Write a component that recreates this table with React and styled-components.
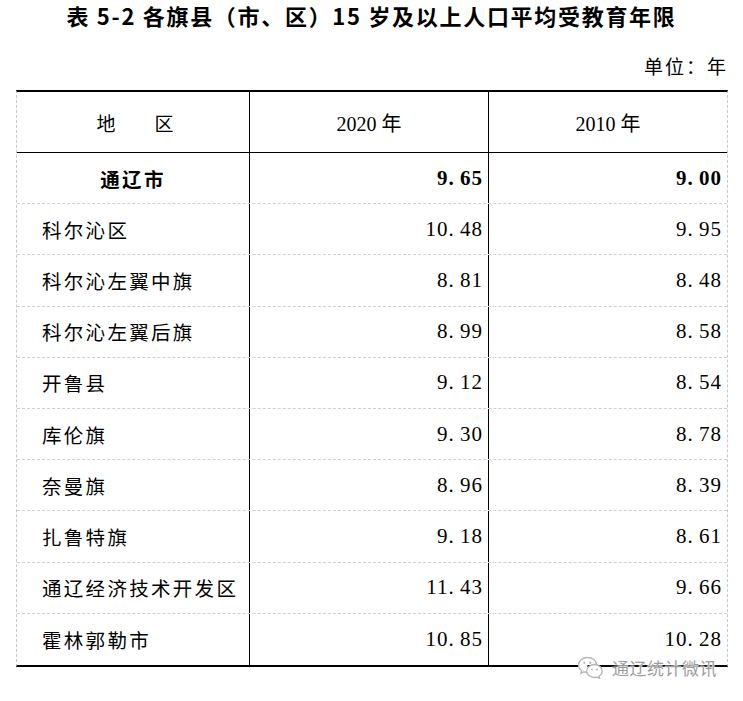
import React from 'react'
import styled, { createGlobalStyle } from 'styled-components'

const rows = [
  ['科尔沁区', '10.48', '9.95'],
  ['科尔沁左翼中旗', '8.81', '8.48'],
  ['科尔沁左翼后旗', '8.99', '8.58'],
  ['开鲁县', '9.12', '8.54'],
  ['库伦旗', '9.30', '8.78'],
  ['奈曼旗', '8.96', '8.39'],
  ['扎鲁特旗', '9.18', '8.61'],
  ['通辽经济技术开发区', '11.43', '9.66'],
  ['霍林郭勒市', '10.85', '10.28'],
]

const Num = ({ value }) => {
  const [a, b] = value.split('.')
  return <>{a}<Dot>.</Dot>{b}</>
}

export default function App() {
  return (
    <Page>
      <GlobalStyle />
      <Title>表 5-2 各旗县（市、区）15 岁及以上人口平均受教育年限</Title>
      <Unit>单位：年</Unit>

      <Table>
        <HeadRow>
          <HeadCell><Spaced>地　区</Spaced></HeadCell>
          <HeadCell line>2020 年</HeadCell>
          <HeadCell line>2010 年</HeadCell>
        </HeadRow>

        <Row>
          <TotalName>通辽市</TotalName>
          <NumCell line bold><Num value="9.65" /></NumCell>
          <NumCell line bold><Num value="9.00" /></NumCell>
        </Row>

        {rows.map((r, i) => (
          <Row key={r[0]} last={i === rows.length - 1}>
            <Name>{r[0]}</Name>
            <NumCell line><Num value={r[1]} /></NumCell>
            <NumCell line><Num value={r[2]} /></NumCell>
          </Row>
        ))}
      </Table>

      <Watermark>
        <svg width="27" height="23" viewBox="0 0 27 23" fill="none">
          <path d="M10.5 1.5C5.3 1.5 1.5 4.9 1.5 9c0 2.3 1.2 4.3 3.2 5.7l-.9 2.8 3.2-1.7c1.1.3 2.2.5 3.5.5"
            stroke="#b5b5b5" strokeWidth="1.3" fill="#fff" />
          <path d="M10.5 1.5c5 0 8.8 3.2 9 7.2" stroke="#b5b5b5" strokeWidth="1.3" />
          <path d="M17.5 8.5c-4.3 0-7.8 2.9-7.8 6.5s3.5 6.5 7.8 6.5c.9 0 1.8-.1 2.6-.4l2.6 1.4-.7-2.3c1.9-1.2 3.2-3.1 3.2-5.2 0-3.6-3.4-6.5-7.7-6.5z"
            stroke="#b5b5b5" strokeWidth="1.3" fill="#fff" />
          <circle cx="7.3" cy="6.8" r="1.1" fill="#b5b5b5" />
          <circle cx="13.3" cy="6.8" r="1.1" fill="#b5b5b5" />
          <circle cx="15" cy="13.5" r=".9" fill="#b5b5b5" />
          <circle cx="20" cy="13.5" r=".9" fill="#b5b5b5" />
        </svg>
        <WatermarkText>通辽统计微讯</WatermarkText>
      </Watermark>
    </Page>
  )
}

const GlobalStyle = createGlobalStyle`
  body {
    margin: 0;
    background: #fff;
    font-family: "Noto Sans CJK SC", sans-serif;
    color: #000;
  }
`

const Page = styled.div`
  position: relative;
  width: 743px;
  height: 701px;
`

const Title = styled.h1`
  margin: 0;
  height: 30px;
  line-height: 30px;
  text-align: center;
  font-size: 22px;
  font-weight: 700;
  letter-spacing: 1.7px;
  font-family: "Noto Sans CJK SC", sans-serif;
`

const Unit = styled.div`
  margin-top: 24px;
  height: 24px;
  line-height: 24px;
  padding-right: 15px;
  text-align: right;
  font-size: 19px;
  letter-spacing: 2px;
  font-family: "Noto Sans CJK SC", sans-serif;
`

const Table = styled.div`
  margin: 12px 0 0 16px;
  width: 712px;
  box-sizing: border-box;
  border-top: 2px solid #000;
  border-bottom: 2px solid #000;
  border-left: 1px dashed #c8c8c8;
  border-right: 1px dashed #c8c8c8;
`

const HeadRow = styled.div`
  display: grid;
  grid-template-columns: 232px 239px 239px;
  height: 61px;
  box-sizing: border-box;
  border-bottom: 1px solid #000;
`

const Row = styled.div`
  display: grid;
  grid-template-columns: 232px 239px 239px;
  height: 51.2px;
  box-sizing: border-box;
  border-bottom: ${p => (p.last ? 'none' : '1px dashed #cfcfcf')};
`

const Cell = styled.div`
  display: flex;
  align-items: center;
  box-sizing: border-box;
  border-left: ${p => (p.line ? '1px solid #000' : 'none')};
`

const HeadCell = styled(Cell)`
  justify-content: center;
  font-size: 20px;
  font-family: "Liberation Serif", "Noto Sans CJK SC", serif;
`

const Spaced = styled.span`
  font-family: "Noto Sans CJK SC", sans-serif;
  font-size: 19px;
  letter-spacing: 10px;
  padding-left: 14px;
`

const Name = styled(Cell)`
  padding-left: 25px;
  font-size: 19.5px;
  letter-spacing: 2.3px;
  font-family: "Noto Sans CJK SC", sans-serif;
`

const TotalName = styled(Cell)`
  justify-content: center;
  font-size: 19.5px;
  font-weight: 700;
  letter-spacing: 2.4px;
  font-family: "Noto Sans CJK SC", sans-serif;
`

const NumCell = styled(Cell)`
  justify-content: flex-end;
  padding-right: 5px;
  font-size: 21px;
  letter-spacing: 1px;
  font-weight: ${p => (p.bold ? 700 : 400)};
  font-family: "Liberation Serif", serif;
`

const Dot = styled.span`
  display: inline-block;
  width: 11.5px;
`

const Watermark = styled.div`
  position: absolute;
  left: 577px;
  top: 655px;
  display: flex;
  align-items: center;
  gap: 8px;
`

const WatermarkText = styled.span`
  font-size: 17px;
  letter-spacing: 0.5px;
  color: #9c9c9c;
  text-shadow: 0 0 2px #fff, 0 0 2px #fff, 0 0 1px #fff;
  font-family: "Noto Sans CJK SC", sans-serif;
`
